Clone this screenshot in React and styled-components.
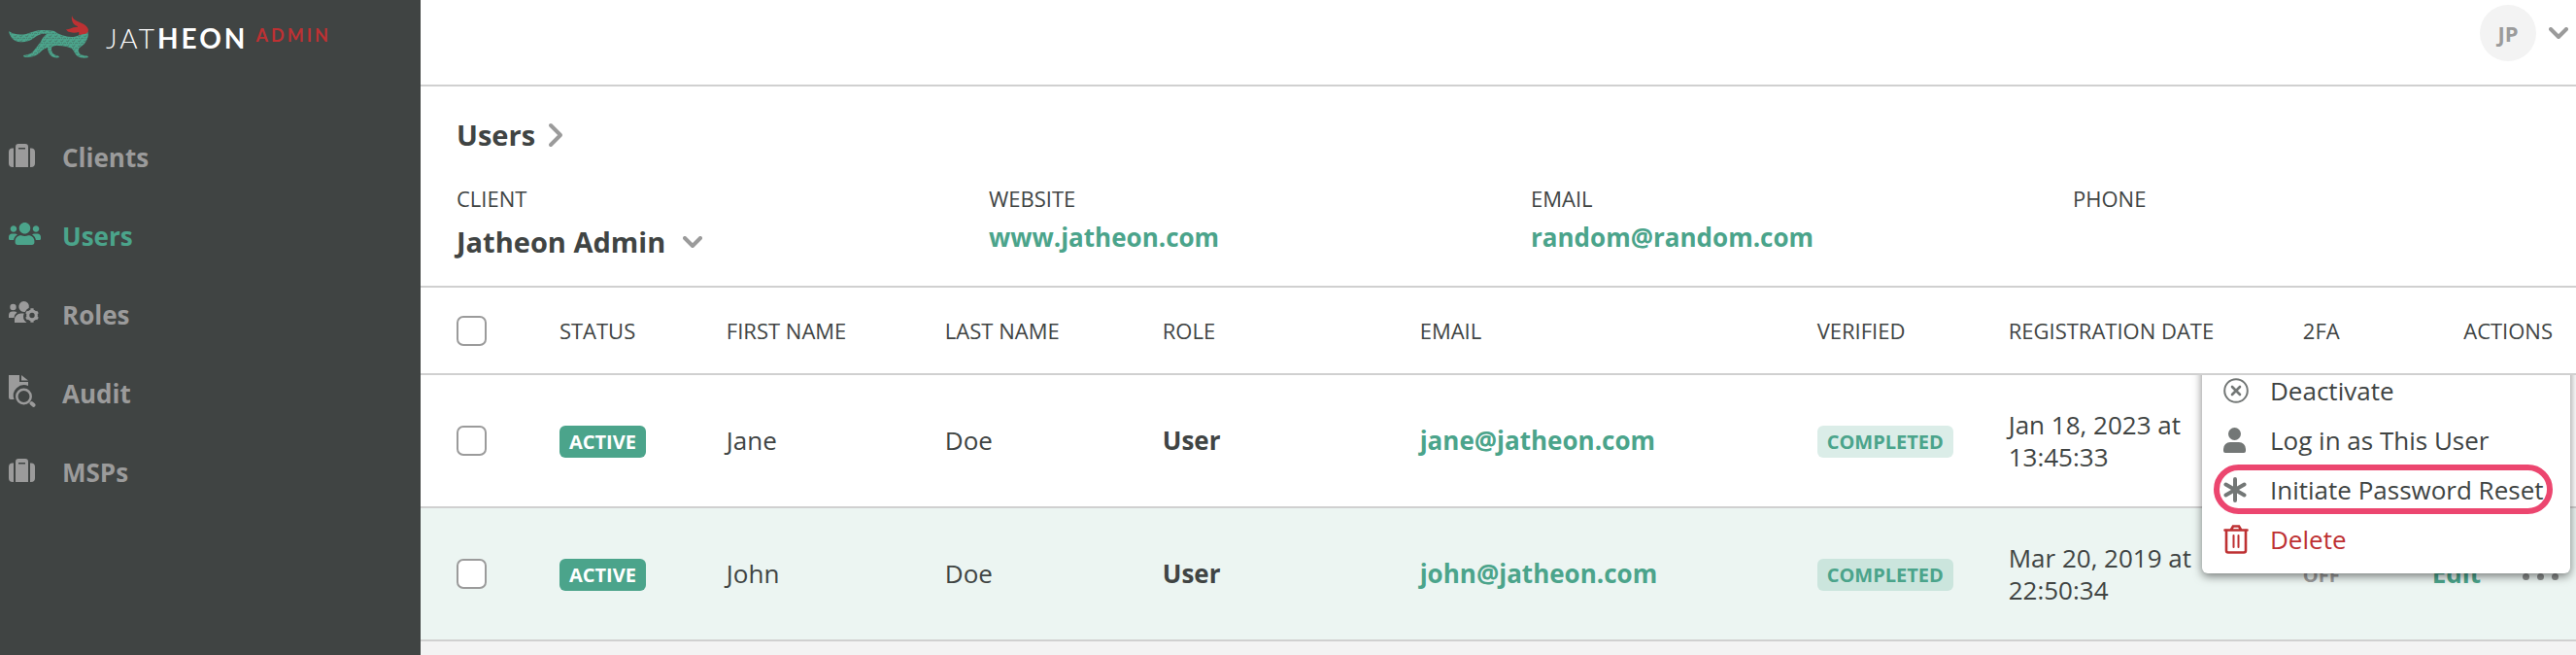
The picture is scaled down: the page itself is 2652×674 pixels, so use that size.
import React, { useState } from 'react';
import styled, { createGlobalStyle } from 'styled-components';
import { FaUsers } from 'react-icons/fa';

const GlobalStyle = createGlobalStyle`
  * {
    box-sizing: border-box;
  }

  body {
    margin: 0;
    background: #f3f3f3;
    color: #404443;
    font-family: "Open Sans", "Noto Sans", sans-serif;
    font-size: 26px;
  }

  button, input {
    font-family: inherit;
  }
`;

const Layout = styled.div`
  display: flex;
  min-height: 100vh;
`;

const Sidebar = styled.aside`
  flex: 0 0 433px;
  background: #404443;
`;

const Brand = styled.a`
  display: flex;
  align-items: flex-start;
  height: 121px;
  padding: 16px 8px 0;
  text-decoration: none;
`;

const Fox = styled.svg`
  width: 84px;
  height: 46px;
  margin-right: 17px;
`;

const Wordmark = styled.span`
  color: #fff;
  font-family: Lato, sans-serif;
  font-size: 28px;
  font-weight: 300;
  line-height: 46px;
  letter-spacing: 3px;

  b {
    font-weight: 700;
  }
`;

const BrandTag = styled.span`
  margin-left: 8px;
  color: #be3133;
  font-family: Lato, sans-serif;
  font-size: 18px;
  font-weight: 700;
  line-height: 40px;
  letter-spacing: 3px;
`;

const Nav = styled.nav`
  display: flex;
  flex-direction: column;
`;

const NavLink = styled.a`
  display: flex;
  align-items: center;
  height: 81px;
  padding-left: 9px;
  color: ${props => (props.$active ? '#4ba48b' : '#9b9b9b')};
  font-size: 26px;
  font-weight: 700;
  text-decoration: none;
`;

const NavIcon = styled.span`
  display: flex;
  width: 55px;
  padding-bottom: 4px;
`;

const Main = styled.main`
  flex: 1;
  min-width: 0;
`;

const TopBar = styled.header`
  display: flex;
  justify-content: flex-end;
  height: 89px;
  padding: 5px 8px;
  background: #fff;
  border-bottom: 2px solid #d0d0d0;
`;

const AccountButton = styled.button`
  display: flex;
  align-items: center;
  gap: 13px;
  height: 58px;
  padding: 0;
  background: none;
  border: none;
  color: #9b9b9b;
  cursor: pointer;
`;

const Avatar = styled.span`
  width: 58px;
  height: 58px;
  border-radius: 50%;
  background: #f3f3f3;
  font-size: 22px;
  font-weight: 700;
  line-height: 58px;
`;

const ClientPanel = styled.section`
  padding: 30px 0 0 37px;
  height: 207px;
  background: #fff;
  border-bottom: 2px solid #d0d0d0;
`;

const Title = styled.h1`
  display: flex;
  align-items: center;
  gap: 13px;
  margin: 0 0 25px;
  font-size: 29px;
  line-height: 40px;
`;

const ClientInfo = styled.div`
  display: grid;
  grid-template-columns: 548fr 558fr 558fr 518fr;
`;

const InfoLabel = styled.div`
  font-size: 22px;
  line-height: 40px;
`;

const InfoLink = styled.a`
  color: #4ba48b;
  font-size: 26px;
  font-weight: 700;
  line-height: 40px;
  text-decoration: none;
`;

const ClientSelect = styled.button`
  display: flex;
  align-items: center;
  gap: 18px;
  padding: 0;
  background: none;
  border: none;
  color: inherit;
  font-size: 29px;
  font-weight: 700;
  line-height: 50px;
  cursor: pointer;
`;

const Table = styled.table`
  width: 100%;
  table-layout: fixed;
  border-collapse: separate;
  border-spacing: 0;
`;

const Col = styled.col`
  width: ${props => props.$width};
`;

const Head = styled.thead`
  position: relative;
  z-index: 2;
`;

const HeadCell = styled.th`
  height: 90px;
  padding: 0 ${props => (props.$end ? '24px' : '0')} 0 ${props => (props.$first ? '37px' : '0')};
  background: #fff;
  border-bottom: 2px solid #d0d0d0;
  font-size: 22px;
  font-weight: 400;
  text-align: ${props => (props.$end ? 'right' : 'left')};
  white-space: nowrap;
`;

const Row = styled.tr`
  background: ${props => (props.$highlighted ? '#ecf5f2' : '#fff')};
`;

const Cell = styled.td`
  position: relative;
  height: 137px;
  padding: 0 0 0 ${props => (props.$first ? '37px' : '0')};
  border-bottom: 2px solid #d0d0d0;
  font-weight: ${props => (props.$bold ? 700 : 400)};
  line-height: 33px;
`;

const DateText = styled.div`
  max-width: 200px;
`;

const Checkbox = styled.input`
  display: block;
  width: 31px;
  height: 31px;
  margin: 0;
  appearance: none;
  background: #fff;
  border: 2px solid #9b9b9b;
  border-radius: 7px;

  &:checked {
    background: #4ba48b;
  }
`;

const Badge = styled.span`
  display: inline-block;
  padding: 0 10px;
  border-radius: 6px;
  background: ${props => (props.$soft ? 'rgba(75, 164, 139, 0.2)' : '#4ba48b')};
  color: ${props => (props.$soft ? '#4ba48b' : '#fff')};
  font-size: 20px;
  font-weight: 700;
  line-height: 33px;
`;

const MailLink = styled.a`
  color: #4ba48b;
  font-weight: 700;
  text-decoration: none;
`;

const TwoFactor = styled.span`
  color: #9b9b9b;
  font-size: 20px;
  font-weight: 700;
`;

const Actions = styled.div`
  display: flex;
  align-items: center;
  justify-content: flex-end;
  gap: 43px;
  padding-right: 18px;
`;

const EditButton = styled.button`
  padding: 0;
  background: none;
  border: none;
  color: #4ba48b;
  font-size: 26px;
  font-weight: 700;
  line-height: 33px;
  cursor: pointer;
`;

const MoreButton = styled.button`
  display: flex;
  gap: 8px;
  padding: 6px 0 0;
  background: none;
  border: none;
  cursor: pointer;
`;

const Dot = styled.span`
  width: 7px;
  height: 7px;
  border-radius: 50%;
  background: #8a8d8c;
`;

const Menu = styled.div`
  position: absolute;
  top: -20px;
  right: 6px;
  z-index: 1;
  width: 379px;
  padding: 10px 12px;
  background: #fff;
  border-radius: 6px;
  box-shadow: 0 3px 10px rgba(0, 0, 0, 0.5);
`;

const MenuItem = styled.button`
  display: flex;
  align-items: center;
  width: 349px;
  height: 51px;
  padding: 0 4px;
  background: none;
  border: 6px solid ${props => (props.$marked ? '#ec466f' : 'transparent')};
  border-radius: 26px;
  color: ${props => (props.$danger ? '#be3133' : '#404443')};
  font-size: 26px;
  white-space: nowrap;
  cursor: pointer;
`;

const MenuIcon = styled.span`
  display: flex;
  flex: 0 0 48px;
  color: ${props => (props.$danger ? '#be3133' : '#737776')};
`;

const Chevron = ({ width, height, d, box }) => (
  <svg width={width} height={height} viewBox={box} fill="none" stroke="#9b9b9b" strokeWidth="4" strokeLinecap="round" strokeLinejoin="round">
    <path d={d} />
  </svg>
);

const ChevronDown = () => <Chevron width="20" height="13" box="0 0 20 13" d="M2 2l8 8 8-8" />;

const ChevronRight = () => <Chevron width="16" height="26" box="0 0 16 26" d="M3 3l10 10L3 23" />;

const SuitcaseIcon = () => (
  <svg width="27" height="24" viewBox="0 0 27 24" fill="currentColor">
    <path d="M4 4.500H5V24H4a4 4 0 0 1-4-4V8.500a4 4 0 0 1 4-4zM23 4.500h-1V24h1a4 4 0 0 0 4-4V8.500a4 4 0 0 0-4-4z" />
    <path fillRule="evenodd" d="M7 24V3a3 3 0 0 1 3-3h7a3 3 0 0 1 3 3v21zM10 4v1.500h7V4z" />
  </svg>
);

const RolesIcon = () => (
  <svg width="31" height="23" viewBox="0 0 31 23" fill="currentColor">
    <circle cx="4.500" cy="6" r="3.200" />
    <path d="M0 17v-2.500A4 4 0 0 1 4 10.500h2a4 4 0 0 1 2.500 1A7 7 0 0 0 5.500 17z" />
    <path d="M15.500 0a5.500 5.500 0 0 1 5.300 6.800 8 8 0 0 0-4 4.100A5.500 5.500 0 1 1 15.500 0z" />
    <path d="M6 22v-3a6.500 6.500 0 0 1 6.500-6.500h3.200a8 8 0 0 0 2.800 9.500z" />
    <circle cx="24" cy="14.500" r="4.300" fill="none" stroke="currentColor" strokeWidth="3.200" />
    <path
      d="M24 10V7.300M24 19v2.700M28 12.200l2-1.200M20 16.800l-2 1.200M28 16.800l2 1.200M20 12.200l-2-1.200"
      stroke="currentColor"
      strokeWidth="3.200"
    />
  </svg>
);

const AuditIcon = () => (
  <svg width="28" height="33" viewBox="0 0 28 33" fill="none">
    <path d="M0 0h11v7h9v4a11 11 0 0 0-14.500 14H2a2 2 0 0 1-2-2z" fill="currentColor" />
    <path d="M13 0l7 5.500h-7z" fill="currentColor" />
    <circle cx="15.500" cy="22" r="7.200" stroke="currentColor" strokeWidth="2.500" />
    <path d="M23.500 29l2 1.800" stroke="currentColor" strokeWidth="4" strokeLinecap="round" />
  </svg>
);

const DeactivateIcon = () => (
  <svg width="26" height="26" viewBox="0 0 26 26" fill="none" stroke="currentColor" strokeLinecap="round">
    <circle cx="13" cy="13" r="11.800" strokeWidth="2" />
    <path d="M9 9l8 8M17 9l-8 8" strokeWidth="2.600" />
  </svg>
);

const PersonIcon = () => (
  <svg width="23" height="26" viewBox="0 0 23 26" fill="currentColor">
    <circle cx="11.500" cy="6.500" r="6.500" />
    <path d="M7 15h9a7 7 0 0 1 7 7v2a2 2 0 0 1-2 2H2a2 2 0 0 1-2-2v-2a7 7 0 0 1 7-7z" />
  </svg>
);

const AsteriskIcon = () => (
  <svg width="24" height="26" viewBox="0 0 24 26" fill="none" stroke="currentColor" strokeWidth="4" strokeLinecap="round">
    <path d="M12 2v22M2.500 7.500l19 11M21.500 7.500l-19 11" />
  </svg>
);

const TrashIcon = () => (
  <svg width="26" height="30" viewBox="0 0 26 30" fill="none" stroke="currentColor" strokeWidth="2.600" strokeLinecap="round">
    <path d="M1.500 5.500h23M8 5l2-3.500h6L18 5" />
    <path d="M3 6v20.500a2 2 0 0 0 2 2h16a2 2 0 0 0 2-2V6" />
    <path d="M10.500 11v12M15.500 11v12" strokeWidth="2" />
  </svg>
);

const FoxLogo = () => (
  <Fox viewBox="0 0 84 46">
    <defs>
      <pattern id="fur" width="6" height="5" patternUnits="userSpaceOnUse">
        <path d="M0 1l2 1 1-2M3 4l2-1 1 1M1 4l1-1" fill="none" stroke="#404443" strokeWidth="0.600" opacity="0.600" />
      </pattern>
      <path
        id="body"
        d="M1 16c6 4 12 4 18 3 6-2 11-4 16-4 5 0 9 0 13 1 4 3 7 4 11 5 6 2 11 1 15-1l8-4c2 4 0 9-3 13-3 3-7 4-6 8 1 3 3 4 6 4 3 0 4 1 4 2-3 1-8 1-11-1-3-2-4-6-6-8-4-2-9-3-14-3-4 0-7 0-7 3 0 4 2 6 5 7 2 0 3 1 3 2-3 1-7 0-9-2-2-3-3-5-3-8-4 1-6 3-9 6-4 3-9 4-13 4-2 0-3-1-3-2 4-1 8-1 10-4 3-3 5-7 8-10 1-3 3-6 6-8-5-1-9 1-13 4-5 4-11 5-16 4C6 26 2 22 1 16z"
      />
    </defs>
    <use href="#body" fill="#4ba48b" />
    <use href="#body" fill="url(#fur)" />
    <path
      fill="#be3133"
      d="M66 0c1 4 4 5 8 7 5 2 8 4 9 8 0 2-2 4-4 4l-6 1c0-1 1-2 0-3-3 1-6 1-9 0-2 0-3-1-4-3 4 1 6-2 10-2 1 0 2 0 2-1-4-1-7-5-6-11z"
    />
  </Fox>
);

const navItems = [
  { label: 'Clients', icon: <SuitcaseIcon /> },
  { label: 'Users', icon: <FaUsers size={33} />, active: true },
  { label: 'Roles', icon: <RolesIcon /> },
  { label: 'Audit', icon: <AuditIcon /> },
  { label: 'MSPs', icon: <SuitcaseIcon /> },
];

const columns = [
  { label: 'STATUS', width: '7.75%' },
  { label: 'FIRST NAME', width: '10.14%' },
  { label: 'LAST NAME', width: '10.09%' },
  { label: 'ROLE', width: '11.94%' },
  { label: 'EMAIL', width: '18.43%' },
  { label: 'VERIFIED', width: '8.88%' },
  { label: 'REGISTRATION DATE', width: '13.66%' },
  { label: '2FA', width: '5.37%' },
  { label: 'ACTIONS', width: '7.3%', end: true },
];

const users = [
  { id: 1, first: 'Jane', last: 'Doe', email: 'jane@jatheon.com', date: 'Jan 18, 2023 at 13:45:33' },
  { id: 2, first: 'John', last: 'Doe', email: 'john@jatheon.com', date: 'Mar 20, 2019 at 22:50:34' },
];

const UserMenu = () => (
  <Menu>
    <MenuItem>
      <MenuIcon><DeactivateIcon /></MenuIcon>
      Deactivate
    </MenuItem>
    <MenuItem>
      <MenuIcon><PersonIcon /></MenuIcon>
      Log in as This User
    </MenuItem>
    <MenuItem $marked>
      <MenuIcon><AsteriskIcon /></MenuIcon>
      Initiate Password Reset
    </MenuItem>
    <MenuItem $danger>
      <MenuIcon $danger><TrashIcon /></MenuIcon>
      Delete
    </MenuItem>
  </Menu>
);

const App = () => {
  const [selected, setSelected] = useState([]);
  const [openMenu, setOpenMenu] = useState(1);

  const toggleUser = id => {
    setSelected(selected.includes(id) ? selected.filter(item => item !== id) : [...selected, id]);
  };

  const toggleAll = e => {
    setSelected(e.target.checked ? users.map(user => user.id) : []);
  };

  return (
    <Layout>
      <GlobalStyle />
      <Sidebar>
        <Brand href="#home">
          <FoxLogo />
          <Wordmark>JAT<b>HEON</b></Wordmark>
          <BrandTag>ADMIN</BrandTag>
        </Brand>
        <Nav>
          {navItems.map(item => (
            <NavLink key={item.label} href={`#${item.label.toLowerCase()}`} $active={item.active}>
              <NavIcon>{item.icon}</NavIcon>
              {item.label}
            </NavLink>
          ))}
        </Nav>
      </Sidebar>

      <Main>
        <TopBar>
          <AccountButton>
            <Avatar>JP</Avatar>
            <ChevronDown />
          </AccountButton>
        </TopBar>

        <ClientPanel>
          <Title>
            Users
            <ChevronRight />
          </Title>
          <ClientInfo>
            <div>
              <InfoLabel>CLIENT</InfoLabel>
              <ClientSelect>
                Jatheon Admin
                <ChevronDown />
              </ClientSelect>
            </div>
            <div>
              <InfoLabel>WEBSITE</InfoLabel>
              <InfoLink href="#website">www.jatheon.com</InfoLink>
            </div>
            <div>
              <InfoLabel>EMAIL</InfoLabel>
              <InfoLink href="mailto:random@random.com">random@random.com</InfoLink>
            </div>
            <div>
              <InfoLabel>PHONE</InfoLabel>
            </div>
          </ClientInfo>
        </ClientPanel>

        <Table>
          <colgroup>
            <Col $width="6.44%" />
            {columns.map(column => <Col key={column.label} $width={column.width} />)}
          </colgroup>
          <Head>
            <tr>
              <HeadCell $first>
                <Checkbox type="checkbox" aria-label="Select all users" checked={selected.length === users.length} onChange={toggleAll} />
              </HeadCell>
              {columns.map(column => (
                <HeadCell key={column.label} $end={column.end}>{column.label}</HeadCell>
              ))}
            </tr>
          </Head>
          <tbody>
            {users.map((user, index) => (
              <Row key={user.id} $highlighted={index % 2 === 1}>
                <Cell $first>
                  <Checkbox type="checkbox" aria-label={`Select ${user.first}`} checked={selected.includes(user.id)} onChange={() => toggleUser(user.id)} />
                </Cell>
                <Cell><Badge>ACTIVE</Badge></Cell>
                <Cell>{user.first}</Cell>
                <Cell>{user.last}</Cell>
                <Cell $bold>User</Cell>
                <Cell><MailLink href={`mailto:${user.email}`}>{user.email}</MailLink></Cell>
                <Cell><Badge $soft>COMPLETED</Badge></Cell>
                <Cell><DateText>{user.date}</DateText></Cell>
                <Cell>{openMenu !== user.id && <TwoFactor>OFF</TwoFactor>}</Cell>
                <Cell>
                  {openMenu === user.id ? (
                    <UserMenu />
                  ) : (
                    <Actions>
                      <EditButton>Edit</EditButton>
                      <MoreButton aria-label="More actions" onClick={() => setOpenMenu(user.id)}>
                        <Dot />
                        <Dot />
                        <Dot />
                      </MoreButton>
                    </Actions>
                  )}
                </Cell>
              </Row>
            ))}
          </tbody>
        </Table>
      </Main>
    </Layout>
  );
};

export default App;
